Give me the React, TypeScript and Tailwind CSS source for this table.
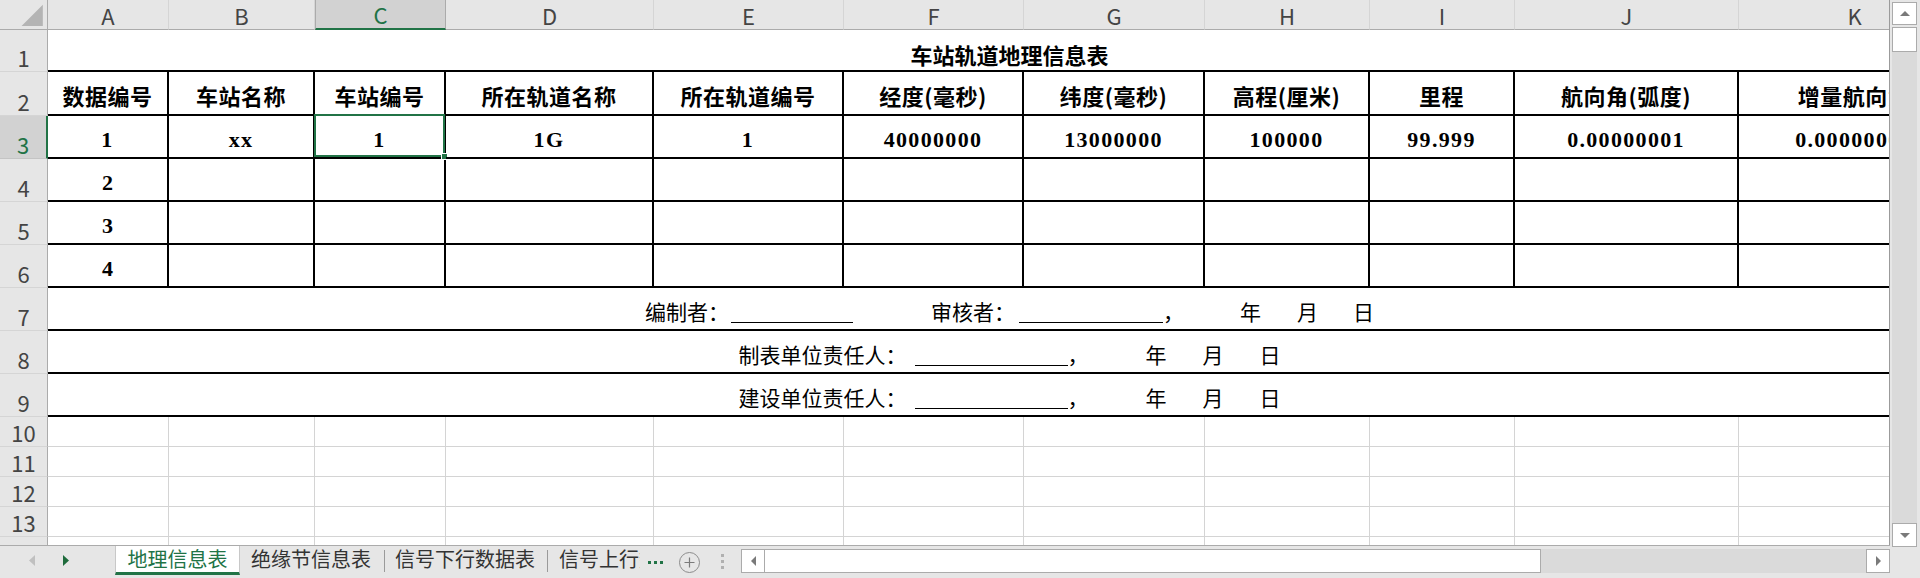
import React from 'react';

const COLS = [
  { k: 'A', w: 'w-[121px]' },
  { k: 'B', w: 'w-[146px]' },
  { k: 'C', w: 'w-[131px]' },
  { k: 'D', w: 'w-[208px]' },
  { k: 'E', w: 'w-[190px]' },
  { k: 'F', w: 'w-[180px]' },
  { k: 'G', w: 'w-[181px]' },
  { k: 'H', w: 'w-[165px]' },
  { k: 'I', w: 'w-[145px]' },
  { k: 'J', w: 'w-[224px]' },
  { k: 'K', w: 'w-[232px]' },
];

const HEADERS = ['数据编号', '车站名称', '车站编号', '所在轨道名称', '所在轨道编号', '经度(毫秒)', '纬度(毫秒)', '高程(厘米)', '里程', '航向角(弧度)', '增量航向角'];
const ROW3 = ['1', 'xx', '1', '1G', '1', '40000000', '13000000', '100000', '99.999', '0.00000001', '0.00000001'];

const CJK = "font-['Noto_Sans_CJK_SC',sans-serif]";
const SERIF = "font-['Liberation_Serif','Noto_Sans_CJK_SC',serif]";

function RowHeader({ n, sel = false }: { n: number; sel?: boolean }) {
  return (
    <div
      className={`w-[48px] shrink-0 flex items-end justify-center pb-[3px] border-r border-b text-[22px] leading-none ${CJK} ${
        sel
          ? 'bg-[#d2d2d2] text-[#217346] border-r-2 border-r-[#217346] border-b-[#c4c4c4]'
          : 'bg-[#e6e6e6] text-[#444444] border-r-[#ababab] border-b-[#d5d5d5]'
      }`}
    >
      {n}
    </div>
  );
}

function Underline({ w }: { w: string }) {
  return <span className={`inline-block ${w} h-px bg-black translate-y-[3px]`} />;
}

function Tri({ dir, color, size = 'w-[7px] h-[11px]' }: { dir: 'l' | 'r' | 'u' | 'd'; color: string; size?: string }) {
  const pts =
    dir === 'l' ? '10,0 10,10 0,5' : dir === 'r' ? '0,0 0,10 10,5' : dir === 'u' ? '0,10 10,10 5,0' : '0,0 10,0 5,10';
  return (
    <svg viewBox="0 0 10 10" preserveAspectRatio="none" className={size}>
      <polygon points={pts} fill={color} />
    </svg>
  );
}

export default function App() {
  return (
    <div className="w-[1920px] h-[578px] overflow-hidden flex bg-[#e6e6e6] text-black">
      {/* left column: grid + tab bar */}
      <div className="w-[1890px] flex flex-col">
        <div className="h-[545px] w-[1890px] overflow-hidden bg-white border-r border-[#9b9b9b]">
          <div className="w-[1971px] flex flex-col">
            {/* column header */}
            <div className="flex h-[30px]">
              <div className="w-[48px] shrink-0 bg-[#e6e6e6] border-r border-b border-[#ababab] flex items-end justify-end">
                <svg viewBox="0 0 48 30" className="w-[47px] h-[29px]">
                  <polygon points="22,27 44,27 44,5" fill="#b4b4b4" />
                </svg>
              </div>
              {COLS.map((c) =>
                c.k === 'C' ? (
                  <div
                    key={c.k}
                    className={`${c.w} shrink-0 flex items-center justify-center bg-[#d2d2d2] border-x border-[#ababab] border-b-2 border-b-[#217346] text-[22px] leading-none text-[#217346] ${CJK}`}
                  >
                    {c.k}
                  </div>
                ) : (
                  <div
                    key={c.k}
                    className={`${c.w} shrink-0 flex items-center justify-center bg-[#e6e6e6] border-r border-r-[#d5d5d5] border-b border-b-[#ababab] text-[22px] leading-none text-[#444444] ${CJK}`}
                  >
                    {c.k}
                  </div>
                )
              )}
            </div>

            {/* row 1 title */}
            <div className="flex h-[42px]">
              <RowHeader n={1} />
              <div className={`w-[1923px] shrink-0 flex items-center justify-center pt-[8px] border-b-2 border-black text-[22px] leading-none font-bold ${CJK}`}>
                车站轨道地理信息表
              </div>
            </div>

            {/* row 2 headers */}
            <div className="flex h-[44px]">
              <RowHeader n={2} />
              {COLS.map((c, i) => (
                <div
                  key={c.k}
                  className={`${c.w} shrink-0 flex items-center justify-center pt-[4px] border-r-2 border-b-2 border-black whitespace-nowrap overflow-hidden text-[22px] leading-none font-bold tracking-[0.5px] ${CJK}`}
                >
                  {HEADERS[i]}
                </div>
              ))}
            </div>

            {/* row 3 data */}
            <div className="flex h-[43px]">
              <RowHeader n={3} sel />
              {COLS.map((c, i) => (
                <div
                  key={c.k}
                  className={`${c.w} shrink-0 relative flex items-center justify-center pt-[7px] border-r-2 border-b-2 border-black whitespace-nowrap text-[22px] leading-none font-bold tracking-[0.06em] ${SERIF}`}
                >
                  {ROW3[i]}
                  {c.k === 'C' && (
                    <div className="absolute top-[-2px] left-[-1px] right-[-1px] bottom-[0px] border-2 border-[#217346]">
                      <div className="absolute right-[-5px] bottom-[-5px] w-[7px] h-[7px] bg-[#217346] border border-white" />
                    </div>
                  )}
                </div>
              ))}
            </div>

            {/* rows 4-6 */}
            {[4, 5, 6].map((r) => (
              <div key={r} className="flex h-[43px]">
                <RowHeader n={r} />
                {COLS.map((c, i) => (
                  <div
                    key={c.k}
                    className={`${c.w} shrink-0 flex items-center justify-center pt-[7px] border-r-2 border-b-2 border-black text-[22px] leading-none font-bold ${SERIF}`}
                  >
                    {i === 0 ? String(r - 2) : ''}
                  </div>
                ))}
              </div>
            ))}

            {/* row 7 */}
            <div className="flex h-[43px]">
              <RowHeader n={7} />
              <div className={`w-[1923px] shrink-0 flex items-center justify-center pt-[5px] border-b-2 border-black text-[21px] leading-none ${CJK}`}>
                <div className="flex items-baseline">
                  <span>编制者：</span>
                  <span className="ml-[2px] flex items-baseline">
                    <Underline w="w-[122px]" />
                  </span>
                  <span className="ml-[78px]">审核者：</span>
                  <span className="ml-[4px] flex items-baseline">
                    <Underline w="w-[144px]" />
                  </span>
                  <span>，</span>
                  <span className="ml-[56px]">年</span>
                  <span className="ml-[36px]">月</span>
                  <span className="ml-[35px]">日</span>
                </div>
              </div>
            </div>

            {/* row 8 */}
            <div className="flex h-[43px]">
              <RowHeader n={8} />
              <div className={`w-[1923px] shrink-0 flex items-center justify-center pt-[5px] border-b-2 border-black text-[21px] leading-none ${CJK}`}>
                <div className="flex items-baseline">
                  <span>制表单位责任人：</span>
                  <span className="ml-[8px] flex items-baseline">
                    <Underline w="w-[153px]" />
                  </span>
                  <span>，</span>
                  <span className="ml-[57px]">年</span>
                  <span className="ml-[36px]">月</span>
                  <span className="ml-[36px]">日</span>
                </div>
              </div>
            </div>

            {/* row 9 */}
            <div className="flex h-[43px]">
              <RowHeader n={9} />
              <div className={`w-[1923px] shrink-0 flex items-center justify-center pt-[5px] border-b-2 border-black text-[21px] leading-none ${CJK}`}>
                <div className="flex items-baseline">
                  <span>建设单位责任人：</span>
                  <span className="ml-[8px] flex items-baseline">
                    <Underline w="w-[153px]" />
                  </span>
                  <span>，</span>
                  <span className="ml-[57px]">年</span>
                  <span className="ml-[36px]">月</span>
                  <span className="ml-[36px]">日</span>
                </div>
              </div>
            </div>

            {/* rows 10-14 empty */}
            {[10, 11, 12, 13, 14].map((r) => (
              <div key={r} className="flex h-[30px]">
                <RowHeader n={r} />
                {COLS.map((c) => (
                  <div key={c.k} className={`${c.w} shrink-0 border-r border-b border-[#d4d4d4]`} />
                ))}
              </div>
            ))}
          </div>
        </div>

        {/* tab bar */}
        <div className={`h-[33px] border-t border-[#ababab] bg-[#e6e6e6] flex items-start text-[20px] leading-none ${CJK}`}>
          <div className="w-[115px] h-[29px] flex items-center">
            <span className="ml-[29px] flex">
              <Tri dir="l" color="#c0c0c0" size="w-[6px] h-[11px]" />
            </span>
            <span className="ml-[28px] flex">
              <Tri dir="r" color="#1e6b3c" size="w-[6px] h-[11px]" />
            </span>
          </div>
          <div className="w-[125px] h-[29px] bg-white border-x border-[#c8c8c8] border-b-[3px] border-b-[#217346] flex items-center justify-center text-[#217346]">
            地理信息表
          </div>
          <div className="w-[144px] h-[26px] flex items-center pl-[11px] text-[#333333]">绝缘节信息表</div>
          <div className="w-px h-[22px] mt-[4px] bg-[#9a9a9a]" />
          <div className="w-[162px] h-[26px] flex items-center pl-[10px] text-[#333333]">信号下行数据表</div>
          <div className="w-px h-[22px] mt-[4px] bg-[#9a9a9a]" />
          <div className="w-[92px] h-[26px] flex items-center pl-[11px] text-[#333333] overflow-hidden whitespace-nowrap">信号上行数据表</div>
          <div className="ml-[8px] h-[32px] flex items-center gap-[3px]">
            <span className="w-[3px] h-[3px] bg-[#217346]" />
            <span className="w-[3px] h-[3px] bg-[#217346]" />
            <span className="w-[3px] h-[3px] bg-[#217346]" />
          </div>
          <div className="ml-[16px] mt-[6px] w-[21px] h-[21px] rounded-full border border-[#8c8c8c] flex items-center justify-center">
            <svg viewBox="0 0 11 11" className="w-[11px] h-[11px]">
              <path d="M5.5 0.5V10.5M0.5 5.5H10.5" stroke="#7a7a7a" strokeWidth="1.2" />
            </svg>
          </div>
          <div className="ml-[21px] mt-[8px] flex flex-col gap-[3px]">
            <span className="w-[3px] h-[3px] bg-[#b0b0b0]" />
            <span className="w-[3px] h-[3px] bg-[#b0b0b0]" />
            <span className="w-[3px] h-[3px] bg-[#b0b0b0]" />
          </div>
          <div className="ml-[17px] mt-[3px] flex-1 h-[24px] flex">
            <div className="w-[24px] h-full bg-white border border-[#ababab] flex items-center justify-center">
              <Tri dir="l" color="#7a7a7a" size="w-[5px] h-[10px]" />
            </div>
            <div className="w-[776px] h-full bg-white border-y border-r border-[#ababab]" />
            <div className="flex-1 h-full bg-[#dadada]" />
            <div className="w-[24px] h-full bg-white border border-[#ababab] flex items-center justify-center">
              <Tri dir="r" color="#7a7a7a" size="w-[5px] h-[10px]" />
            </div>
          </div>
        </div>
      </div>

      {/* vertical scrollbar */}
      <div className="w-[30px] h-[578px] flex flex-col pl-[2px] bg-[#e6e6e6]">
        <div className="mt-[2px] w-[25px] h-[23px] bg-white border border-[#ababab] flex items-center justify-center">
          <Tri dir="u" color="#7a7a7a" size="w-[10px] h-[5px]" />
        </div>
        <div className="mt-[2px] w-[25px] flex-1 bg-[#dadada] flex flex-col">
          <div className="w-[25px] h-[25px] bg-white border border-[#ababab]" />
        </div>
        <div className="w-[25px] h-[24px] bg-white border border-[#ababab] flex items-center justify-center">
          <Tri dir="d" color="#7a7a7a" size="w-[10px] h-[5px]" />
        </div>
        <div className="h-[31px]" />
      </div>
    </div>
  );
}
